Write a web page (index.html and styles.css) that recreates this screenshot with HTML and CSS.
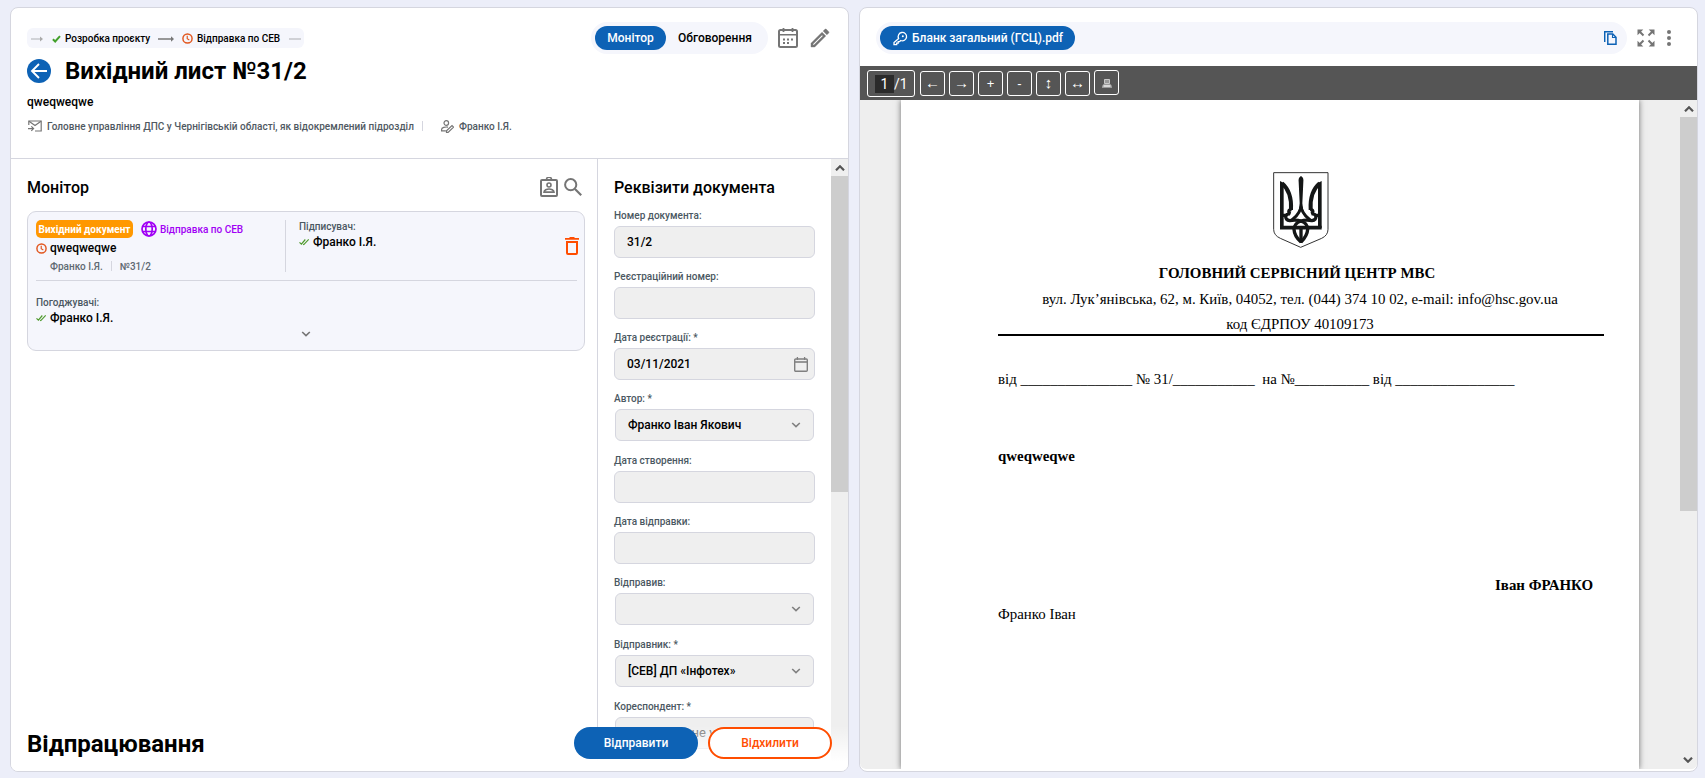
FILE: index.html
```
<!DOCTYPE html>
<html lang="uk">
<head>
<meta charset="utf-8">
<title>Вихідний лист №31/2</title>
<link rel="stylesheet" href="styles.css">
</head>
<body>
<svg class="defs" width="0" height="0">
  <symbol id="chevron" viewBox="0 0 10 6"><path d="M1.2 1l3.8 3.6L8.800 1" fill="none" stroke="currentColor" stroke-width="1.6"/></symbol>
  <symbol id="scroll-arrow" viewBox="0 0 10 6"><path d="M1 5.300L5 1.300l4 4" fill="none" stroke="#555" stroke-width="2.2"/></symbol>
  <symbol id="clock" viewBox="0 0 12 12"><circle cx="6" cy="6" r="5" fill="none" stroke="#e2571f" stroke-width="1.600"/><path d="M5.700 3v3.300l2.300 1.300" fill="none" stroke="#e2571f" stroke-width="1.300"/></symbol>
  <symbol id="done-all" viewBox="0 0 11 8"><path d="M.5 4.300l1.900 1.900L6.300 1.500M4.100 6.200l.7.400L9.700 1.300" fill="none" stroke="#4f9a2e" stroke-width="1.200"/></symbol>
</svg>
<div class="app">
  <section class="panel doc">
    <header class="doc-head">
      <div class="top-row">
        <div class="route">
          <svg class="arr-a" width="12" height="6" viewBox="0 0 12 6"><path d="M0 3h10" stroke="#c5c7cc" stroke-width="1.300"/><path d="M9 .5L12 3 9 5.500z" fill="#aaa"/></svg>
          <svg class="check" width="9" height="8" viewBox="0 0 9 8"><path d="M.9 4.200l2.300 2.300L8 1.200" fill="none" stroke="#43a02c" stroke-width="2"/></svg>
          <span class="step s1">Розробка проєкту</span>
          <svg class="arr-b" width="16" height="6" viewBox="0 0 16 6"><path d="M0 3h14" stroke="#777" stroke-width="1.300"/><path d="M13 .3L16 3l-3 2.700z" fill="#777"/></svg>
          <svg width="11" height="11"><use href="#clock"/></svg>
          <span class="step s2">Відправка по СЕВ</span>
          <svg width="12" height="6" viewBox="0 0 12 6"><path d="M0 3h12" stroke="#c3c5ca" stroke-width="1.300"/></svg>
        </div>
        <div class="top-tools">
          <div class="switch"><span class="on">Монітор</span><span class="off">Обговорення</span></div>
          <svg class="cal" width="20" height="20" viewBox="0 0 20 20" fill="none" stroke="#757575"><rect x="1" y="2" width="18" height="17" rx="1.500" stroke-width="2"/><path d="M5.500 0v4M14.500 0v4" stroke-width="1.800"/><path d="M1 6.800h18" stroke-width="1.600"/><path d="M9 11.500h2M13 11.500h2M5 11.500h2M5 15h2M9 15h2" stroke-width="2"/></svg>
          <svg class="pen" width="24" height="24" viewBox="0 0 24 24"><path d="M3 17.250V21h3.750L17.810 9.940l-3.750-3.750L3 17.250zM5.920 19H5v-.92l9.060-9.060.92.920L5.920 19zM20.710 5.630l-2.340-2.340c-.2-.2-.45-.29-.71-.29s-.51.100-.7.290l-1.830 1.830 3.750 3.750 1.830-1.830c.39-.39.39-1.020 0-1.410z" fill="#757575" stroke="#757575" stroke-width=".4"/></svg>
        </div>
      </div>
      <div class="title-row">
        <svg width="24" height="24" viewBox="0 0 24 24"><circle cx="12" cy="12" r="12" fill="#0d62b5"/><path d="M20 12H5.500M12 5l-7 7 7 7" fill="none" stroke="#fff" stroke-width="1.900"/></svg>
        <h1>Вихідний лист №31/2</h1>
      </div>
      <div class="subject">qweqweqwe</div>
      <div class="meta">
        <svg width="14" height="12" viewBox="0 0 14 12" fill="none" stroke="#757575" stroke-width="1.200"><path d="M.8 5V1h12.400v10H7"/><path d="M1 1.200l6 4.300 6-4.300M0 8.600h5M3.300 6.300l2.300 2.300-2.300 2.300"/></svg>
        <span class="org">Головне управління ДПС у Чернігівській області, як відокремлений підрозділ</span>
        <i class="sep"></i>
        <svg class="signer" width="13" height="13" viewBox="0 0 13 13" fill="none" stroke="#757575" stroke-width="1.200"><circle cx="5.300" cy="3" r="2.300"/><path d="M7 7.200C4 6.600 .6 7.600 .6 9.600v1.300h4.200M5.500 12.400v-1.700L11 5.600l1.500 1.500-5.400 5.300z"/></svg>
        <span class="who">Франко І.Я.</span>
      </div>
    </header>
    <div class="doc-body">
      <div class="monitor">
        <div class="mon-head">
          <h2>Монітор</h2>
          <div class="mon-icons">
            <svg width="18" height="20" viewBox="0 0 18 20" fill="none" stroke="#757575"><rect x="1" y="3" width="16" height="16" rx="1" stroke-width="2"/><path d="M6.500 2.500a2.500 2.200 0 0 1 5 0" stroke-width="1.600"/><circle cx="9" cy="8" r="2" stroke-width="1.600"/><path d="M4 15.200c0-2 3-3.200 5-3.200s5 1.200 5 3.200z" stroke-width="1.700"/></svg>
            <svg width="18" height="18" viewBox="0 0 18 18" fill="none" stroke="#757575" stroke-width="2"><circle cx="6.700" cy="6.700" r="5.600"/><path d="M11 11l6.200 6.200" stroke-width="2.200"/></svg>
          </div>
        </div>
        <article class="card">
          <div class="card-top">
            <div class="card-main">
              <div class="tags">
                <span class="badge">Вихідний документ</span>
                <svg width="16" height="16" viewBox="0 0 16 16" fill="none" stroke="#a100f5" stroke-width="1.700"><circle cx="8" cy="8" r="7"/><ellipse cx="8" cy="8" rx="3.200" ry="7"/><path d="M1.500 5.500h13M1.500 10.500h13"/></svg>
                <span class="sev">Відправка по СЕВ</span>
              </div>
              <div class="name-row"><svg width="11" height="11"><use href="#clock"/></svg><b class="name">qweqweqwe</b></div>
              <div class="sub-row"><span class="author">Франко І.Я.</span><i class="sep"></i><span class="num">№31/2</span></div>
            </div>
            <div class="card-sign">
              <div class="lab">Підписувач:</div>
              <div class="person"><svg width="11" height="8"><use href="#done-all"/></svg><b>Франко І.Я.</b></div>
            </div>
            <svg class="trash" width="14" height="18" viewBox="0 0 14 18" fill="none" stroke="#ff4d00" stroke-width="2"><path d="M2 5h10v11a1 1 0 0 1-1 1H3a1 1 0 0 1-1-1z"/><path d="M0 1.900h14" stroke-width="1.900"/><path d="M4.500 .8h5" stroke-width="1.600"/></svg>
          </div>
          <div class="card-bottom">
            <div class="lab agree">Погоджувачі:</div>
            <div class="person"><svg width="11" height="8"><use href="#done-all"/></svg><b>Франко І.Я.</b></div>
            <svg class="more" width="10" height="6"><use href="#chevron"/></svg>
          </div>
        </article>
      </div>
      <div class="props">
        <form class="form">
          <h2>Реквізити документа</h2>
          <div class="field"><label>Номер документа:</label><div class="input"><span>31/2</span></div></div>
          <div class="field"><label>Реєстраційний номер:</label><div class="input"></div></div>
          <div class="field"><label>Дата реєстрації: *</label><div class="input"><span>03/11/2021</span><svg class="date" width="14" height="15" viewBox="0 0 14 15" fill="none" stroke="#808080"><rect x=".7" y="2" width="12.600" height="12.200" rx="1" stroke-width="1.400"/><path d="M3.400 0v3M10.600 0v3" stroke-width="1.300"/><path d="M1 5h12" stroke-width="1.600"/></svg></div></div>
          <div class="field select"><label>Автор: *</label><div class="input"><span>Франко Іван Якович</span><svg width="10" height="6"><use href="#chevron"/></svg></div></div>
          <div class="field"><label>Дата створення:</label><div class="input"></div></div>
          <div class="field"><label>Дата відправки:</label><div class="input"></div></div>
          <div class="field select"><label>Відправив:</label><div class="input"><span></span><svg width="10" height="6"><use href="#chevron"/></svg></div></div>
          <div class="field select"><label>Відправник: *</label><div class="input"><span>[СЕВ] ДП «Інфотех»</span><svg width="10" height="6"><use href="#chevron"/></svg></div></div>
          <div class="field select"><label>Кореспондент: *</label><div class="input"><span class="hint">Значення не указано</span></div></div>
        </form>
        <div class="scroll"><div class="sbtn"><svg width="10" height="6"><use href="#scroll-arrow"/></svg></div><div class="thumb short"></div></div>
      </div>
    </div>
    <footer class="actions">
      <h1>Відпрацювання</h1>
      <button class="btn send">Відправити</button>
      <button class="btn reject">Відхилити</button>
    </footer>
  </section>

  <section class="panel viewer">
    <header class="file-head">
      <div class="files">
        <div class="file-tab">
          <svg width="15" height="15" viewBox="0 0 15 15" fill="none" stroke="#fff" stroke-width="1.300"><path d="M5.600 7.500A4.200 4.200 0 1 1 7.700 9.500L6.600 10.600H5.200v1.500H3.700v1.500H1v-2.100z"/><circle cx="9.800" cy="5.200" r="1" fill="#fff" stroke="none"/></svg>
          <span>Бланк загальний (ГСЦ).pdf</span>
        </div>
        <svg class="copy" width="13" height="14" viewBox="0 0 13 14" fill="none" stroke="#0d62b5" stroke-width="1.500"><path d="M.7 11V.8H9"/><path d="M3.800 3h5l3.200 3.300v7H3.800z"/><path d="M8.500 3v3.500H12" stroke-width="1.100"/></svg>
      </div>
      <svg class="expand" width="18" height="18" viewBox="0 0 18 18" fill="#757575" stroke="#757575" stroke-width="2"><path d="M.5.500h5.800L.5 6.300zM17.500.500v5.800L11.700.500zM.5 17.500v-5.800l5.800 5.800zM17.500 17.500h-5.800l5.800-5.800z" stroke="none"/><path d="M2 2l4.500 4.500M16 2l-4.500 4.500M2 16l4.500-4.500M16 16l-4.500-4.500"/></svg>
      <svg class="dots" width="4" height="16" viewBox="0 0 4 16" fill="#757575"><circle cx="2" cy="2" r="2"/><circle cx="2" cy="8" r="2"/><circle cx="2" cy="14" r="2"/></svg>
    </header>
    <div class="toolbar">
      <div class="pager"><span class="cur">1</span><span>/1</span></div>
      <div class="tb arrow">←</div><div class="tb arrow">→</div><div class="tb">+</div><div class="tb">-</div><div class="tb arrow">↕</div><div class="tb arrow">↔</div>
      <div class="tb print"><svg width="10" height="9" viewBox="0 0 10 9"><path d="M2.500 .5h5v4h-5z" fill="#999" stroke="#ddd" stroke-width=".8"/><path d="M1.500 5h7L10 7v2H0V7z" fill="#999"/><path d="M1.500 7h7" stroke="#eee" stroke-width="1.400"/></svg></div>
    </div>
    <div class="stage">
      <div class="paper">
        <svg class="emblem" width="56" height="76" viewBox="0 0 168 228" fill="none" stroke="#141616" stroke-width="8">
          <path d="M2 2H165V172Q165 190 146 199L83 226L22 199Q2 190 2 172Z" stroke="#333" stroke-width="3"/>
          <path d="M21 27Q30 30 37 38L32 44V168H21ZM146 27Q137 30 130 38L135 44V168H146Z" fill="#141616" stroke="none"/>
          <path d="M21 167H146" stroke-width="11"/>
          <path d="M27 34C48 52 56 82 54 114M140 34C119 52 111 82 113 114" stroke-width="12"/>
          <path d="M56 113C46 112 45 122 52 126C36 122 32 144 50 146C72 142 104 146 104 172C103 190 92 202 84 210M111 113C121 112 122 122 115 126C131 122 135 144 117 146C95 142 64 146 63 172C64 190 75 202 84 210" stroke-width="10"/>
          <path d="M28 130H40M139 130H127" stroke-width="10"/>
          <path d="M84 104C80 128 64 136 54 147M84 104C88 128 104 136 114 147" stroke-width="9"/>
          <path d="M84 12Q93 17 91 30L88 94L91 118L84 114L77 118L80 94L77 30Q75 17 84 12Z" fill="#141616" stroke="none"/>
          <path d="M84 164V208" stroke-width="10"/>
        </svg>
        <div class="l1">ГОЛОВНИЙ СЕРВІСНИЙ ЦЕНТР МВС</div>
        <div class="l2">вул. Лук’янівська, 62, м. Київ, 04052, тел. (044) 374 10 02, e-mail: info@hsc.gov.ua</div>
        <div class="l3">код ЄДРПОУ 40109173</div>
        <div class="rule"></div>
        <div class="reg">від _______________ № 31/___________  на №__________ від ________________</div>
        <div class="topic">qweqweqwe</div>
        <div class="signature">Іван ФРАНКО</div>
        <div class="executor">Франко Іван</div>
      </div>
      <div class="scroll"><div class="sbtn"><svg width="10" height="6"><use href="#scroll-arrow"/></svg></div><div class="thumb long"></div><div class="sbtn down"><svg width="10" height="6"><use href="#scroll-arrow"/></svg></div></div>
    </div>
  </section>
</div>
</body>
</html>
```
FILE: styles.css
```
* { box-sizing: border-box; }
body { margin: 0; background: #eceef9; font-family: Roboto, "Liberation Sans", sans-serif; color: #000; }
svg { display: block; flex: none; }
h1, h2 { margin: 0; white-space: nowrap; }
h1 { font-size: 24px; font-weight: 700; line-height: 28px; }
h2 { font-size: 16px; font-weight: 500; line-height: 20px; }
.defs { position: absolute; }
.app { display: flex; gap: 10px; height: 778px; padding: 7px 7px 6px 10px; overflow: hidden; }
.panel { width: 839px; height: 765px; flex: none; background: #fff; border: 1px solid #d5d6df; border-radius: 8px; overflow: hidden; }
.doc { position: relative; display: flex; flex-direction: column; }
.sep { width: 1px; height: 10px; background: #d5d6df; }

/* document header */
.doc-head { height: 151px; flex: none; border-bottom: 1px solid #d5d6df; padding: 14px 16px 0 16px; }
.top-row { display: flex; justify-content: space-between; height: 32px; }
.route { display: flex; align-items: center; width: 277px; height: 20px; margin-top: 6px; padding: 1px 0 0 4px; background: #f5f6fc; border-radius: 6px; }
.step { font-size: 10px; font-weight: 500; line-height: 12px; white-space: nowrap; }
.arr-a { margin-right: 9px; }
.check { margin-right: 4px; }
.s1 { width: 85px; margin-right: 8px; }
.arr-b { margin-right: 8px; }
.s2 { width: 83px; margin: 0 9px 0 4px; }
.top-tools { display: flex; align-items: center; }
.switch { display: flex; align-items: center; width: 177px; height: 32px; padding: 0 4px; background: #f5f6fc; border-radius: 16px; font-size: 12px; font-weight: 500; }
.switch span { height: 24px; line-height: 24px; text-align: center; }
.switch .on { width: 71px; background: #0d62b5; color: #fff; border-radius: 12px; }
.switch .off { width: 98px; }
.cal { margin: 0 10px; }
.title-row { display: flex; align-items: center; gap: 14px; height: 28px; margin-top: 3px; }
.subject { margin-top: 9px; font-size: 12px; font-weight: 500; line-height: 16px; }
.meta { display: flex; align-items: center; height: 14px; margin-top: 9px; padding-left: 1px; font-size: 10px; font-weight: 500; color: #505962; }
.org { width: 367px; margin: 0 8px 0 5px; white-space: nowrap; letter-spacing: .012px; }
.signer { margin: 0 5px 0 18px; }

/* monitor column */
.doc-body { display: flex; flex: 1; min-height: 0; }
.monitor { width: 587px; padding: 18px 12px 0 16px; border-right: 1px solid #d5d6df; }
.mon-head { display: flex; justify-content: space-between; align-items: center; height: 20px; padding-right: 3px; }
.mon-head h2 { padding-top: 2px; }
.mon-icons { display: flex; gap: 6px; align-items: center; }
.card { width: 558px; height: 140px; margin-top: 14px; padding: 8px; background: #f5f6fc; border: 1px solid #d5d6df; border-radius: 9px; }
.card-top { display: flex; height: 61px; width: 541px; border-bottom: 1px solid #d5d6df; }
.card-main { width: 250px; height: 52px; border-right: 1px solid #d5d6df; }
.tags { display: flex; align-items: center; height: 18px; }
.badge { width: 97px; height: 18px; margin-right: 8px; border-radius: 5px; background: #ff9800; color: #fff; font-size: 10px; font-weight: 700; line-height: 19px; text-align: center; white-space: nowrap; }
.sev { margin-left: 3px; font-size: 10px; font-weight: 500; color: #a100f5; white-space: nowrap; line-height: 12px; padding-top: 1px; }
.name-row { display: flex; align-items: center; gap: 3px; height: 20px; font-size: 12px; line-height: 14px; }
.name-row svg { margin-top: 1px; }
.name { padding-bottom: 1px; }
b { font-weight: 500; }
.sub-row { display: flex; align-items: center; height: 16px; padding-left: 14px; font-size: 10px; font-weight: 500; color: #5f6972; }
.sub-row .sep { margin: 0 8px; }
.card-sign { padding: 1px 0 0 13px; flex: 1; }
.lab { font-size: 10px; font-weight: 500; line-height: 12px; color: #4b5862; }
.person { display: flex; align-items: center; gap: 3px; height: 17px; font-size: 12px; }
.trash { margin: 17px -2px 0 0; }
.card-bottom { padding-top: 16px; }
.more { margin: 5px 0 0 265px; color: #757575; }

/* properties column */
.props { display: flex; flex: 1; justify-content: space-between; }
.form { width: 217px; padding: 19px 0 0 16px; }
.field { width: 201px; height: 61px; }
.form h2 { margin-bottom: 9px; }
.field label { display: block; height: 19px; font-size: 10px; font-weight: 500; line-height: 17px; color: #4b5862; white-space: nowrap; }
.input { display: flex; align-items: center; justify-content: space-between; height: 32px; padding: 0 12px 0 12px; background: #efefef; border: 1px solid #d5d6df; border-radius: 6px; font-size: 12px; font-weight: 500; }
.input span { white-space: nowrap; padding-bottom: 1px; }
.input .date { margin-right: -6px; }
.select { height: 62px; }
.select .input { margin: 0 1px; color: #000; }
.select .input svg { color: #808080; }
.select .input .hint { margin-left: 2px; color: #757575; font-size: 13px; font-weight: 400; }
.scroll { display: flex; flex-direction: column; width: 17px; background: #efefef; }
.sbtn { display: grid; place-items: center; height: 17px; flex: none; }
.down { margin-top: auto; transform: rotate(180deg); }
.thumb { background: #cdcdcd; }
.short { height: 316px; }
.long { height: 394px; }

/* bottom action bar floats over the scrolled columns */
.actions { position: absolute; left: 0; right: 0; bottom: 0; display: flex; align-items: center; height: 55px; padding: 0 16px 1px; background: linear-gradient(rgba(255,255,255,0) 10px, #fff 45px); }
.actions h1 { margin-right: auto; padding-top: 2px; }
.btn { width: 124px; height: 32px; padding: 0; border: 0; border-radius: 16px; font: 500 12px/32px Roboto, sans-serif; margin-left: 10px; }
.send { background: #0d62b5; color: #fff; }
.reject { background: #fff; color: #ff4d00; border: 2px solid #ff4d00; line-height: 28px; }

/* file viewer */
.viewer { display: flex; flex-direction: column; }
.file-head { display: flex; align-items: center; height: 58px; flex: none; padding: 2px 0 0 16px; }
.files { display: flex; align-items: center; justify-content: space-between; width: 751px; height: 32px; padding: 0 10px 0 4px; background: #f5f6fc; border-radius: 16px; }
.file-tab { display: flex; align-items: center; gap: 4px; width: 195px; height: 24px; padding-left: 13px; border-radius: 12px; background: #0d62b5; color: #fff; font-size: 12px; font-weight: 500; white-space: nowrap; }
.expand { margin: 0 12px 0 10px; }
.toolbar { display: flex; gap: 4px; height: 34px; flex: none; padding: 5px 7px; background: #555; color: #fff; font: 13px "Liberation Sans", sans-serif; }
.pager { display: flex; align-items: center; width: 48px; height: 27px; margin: -1px 1px 0 0; padding-left: 7px; border: 1px solid #fff; border-radius: 3px; font: 14px Roboto, sans-serif; }
.cur { width: 19px; height: 18px; line-height: 18px; text-align: center; background: #2a2a2a; }
.tb { display: flex; justify-content: center; width: 25px; height: 25px; line-height: 23px; border: 1px solid #fff; border-radius: 3px; }
.arrow { font-size: 15px; line-height: 21px; }
.print { align-items: center; margin-top: -1px; padding-top: 2px; }
.stage { display: flex; justify-content: space-between; height: 669px; flex: none; background: #eee; padding-left: 41px; overflow: hidden; border-radius: 0 0 6px 6px; }
.paper { width: 738px; height: 669px; padding: 72px 35px 0 97px; background: #fff; box-shadow: 0 0 6px rgba(0,0,0,.55); font: 14.9px/26px "Liberation Serif", serif; }
.emblem { margin-left: 275px; }
.l1, .l2, .l3 { width: 598px; text-align: center; height: 25.700px; white-space: nowrap; }
.l1 { margin-top: 12px; font-weight: 700; }
.l2, .l3 { padding-left: 3px; width: 601px; }
.rule { height: 2px; margin-top: -3px; background: #000; }
.reg { margin-top: 30px; white-space: pre; }
.topic { margin-top: 51px; font-weight: 700; }
.signature { margin: 103px 11px 0 0; font-weight: 700; text-align: right; }
.executor { margin-top: 3px; }
```
